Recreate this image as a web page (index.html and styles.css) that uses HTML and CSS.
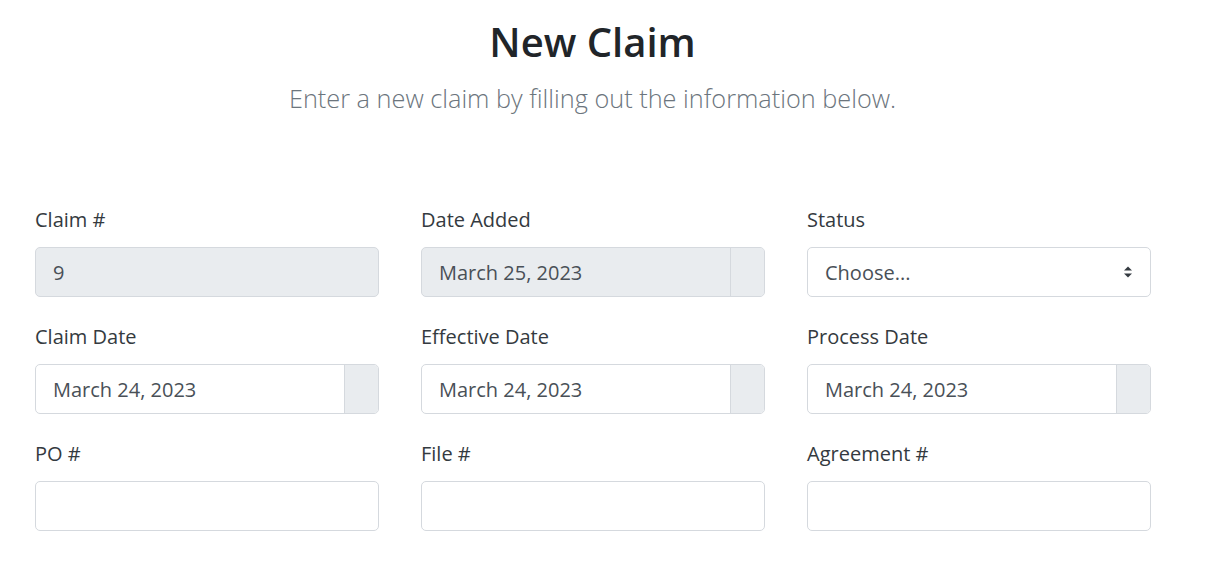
FILE: index.html
```html
<!DOCTYPE html>
<html lang="en">
<head>
<meta charset="utf-8">
<title>New Claim</title>
<link rel="stylesheet" href="styles.css">
</head>
<body>
<main class="page">
  <header class="intro">
    <h1 class="title">New Claim</h1>
    <p class="lead">Enter a new claim by filling out the information below.</p>
  </header>
  <form class="grid">
    <div class="field">
      <label class="label">Claim #</label>
      <div class="control disabled"><span class="value">9</span></div>
    </div>
    <div class="field">
      <label class="label">Date Added</label>
      <div class="control disabled group"><span class="value">March 25, 2023</span><span class="addon"></span></div>
    </div>
    <div class="field">
      <label class="label">Status</label>
      <div class="control select"><span class="value">Choose...</span>
        <svg class="caret" width="10" height="14" viewBox="0 0 10 14"><path d="M1 5.5 L5 1.5 L9 5.5 Z M1 8.5 L5 12.5 L9 8.5 Z" fill="#343a40"/></svg>
      </div>
    </div>
    <div class="field">
      <label class="label">Claim Date</label>
      <div class="control group"><span class="value">March 24, 2023</span><span class="addon"></span></div>
    </div>
    <div class="field">
      <label class="label">Effective Date</label>
      <div class="control group"><span class="value">March 24, 2023</span><span class="addon"></span></div>
    </div>
    <div class="field">
      <label class="label">Process Date</label>
      <div class="control group"><span class="value">March 24, 2023</span><span class="addon"></span></div>
    </div>
    <div class="field">
      <label class="label">PO #</label>
      <div class="control"></div>
    </div>
    <div class="field">
      <label class="label">File #</label>
      <div class="control"></div>
    </div>
    <div class="field">
      <label class="label">Agreement #</label>
      <div class="control"></div>
    </div>
  </form>
</main>
</body>
</html>
```
FILE: styles.css
```css
* { box-sizing: border-box; }
html, body { margin: 0; padding: 0; background: #fff; }
body {
  font-family: "Open Sans", "Noto Sans", "Liberation Sans", sans-serif;
  color: #212529;
}
.page {
  width: 1115px;
  margin-left: 35px;
  padding-top: 16px;
}
.intro { text-align: center; }
.title {
  margin: 0;
  font-size: 40px;
  font-weight: 600;
  line-height: 52px;
  color: #212529;
}
.lead {
  margin: 12px 0 0;
  font-size: 25.3px;
  font-weight: 300;
  line-height: 36px;
  color: #6c757d;
}
.grid {
  margin-top: 89px;
  display: grid;
  grid-template-columns: repeat(3, 344px);
  column-gap: 42px;
  row-gap: 25px;
}
.field { display: flex; flex-direction: column; }
.label {
  font-size: 20px;
  line-height: 30px;
  margin-bottom: 12px;
  color: #343a40;
}
.control {
  height: 50px;
  border: 1.5px solid #d5d9de;
  border-radius: 5px;
  background: #fff;
  display: flex;
  align-items: center;
  padding-left: 17px;
  font-size: 20px;
  color: #495057;
  overflow: hidden;
}
.control.disabled { background: #e9ecef; }
.control.group { padding-left: 0; }
.control.group .value { flex: 1; padding-left: 17px; }
.addon {
  width: 34px;
  align-self: stretch;
  background: #e9ecef;
  border-left: 1.5px solid #d5d9de;
}
.control.select { justify-content: space-between; padding-right: 17px; }
.caret { display: block; }
```
